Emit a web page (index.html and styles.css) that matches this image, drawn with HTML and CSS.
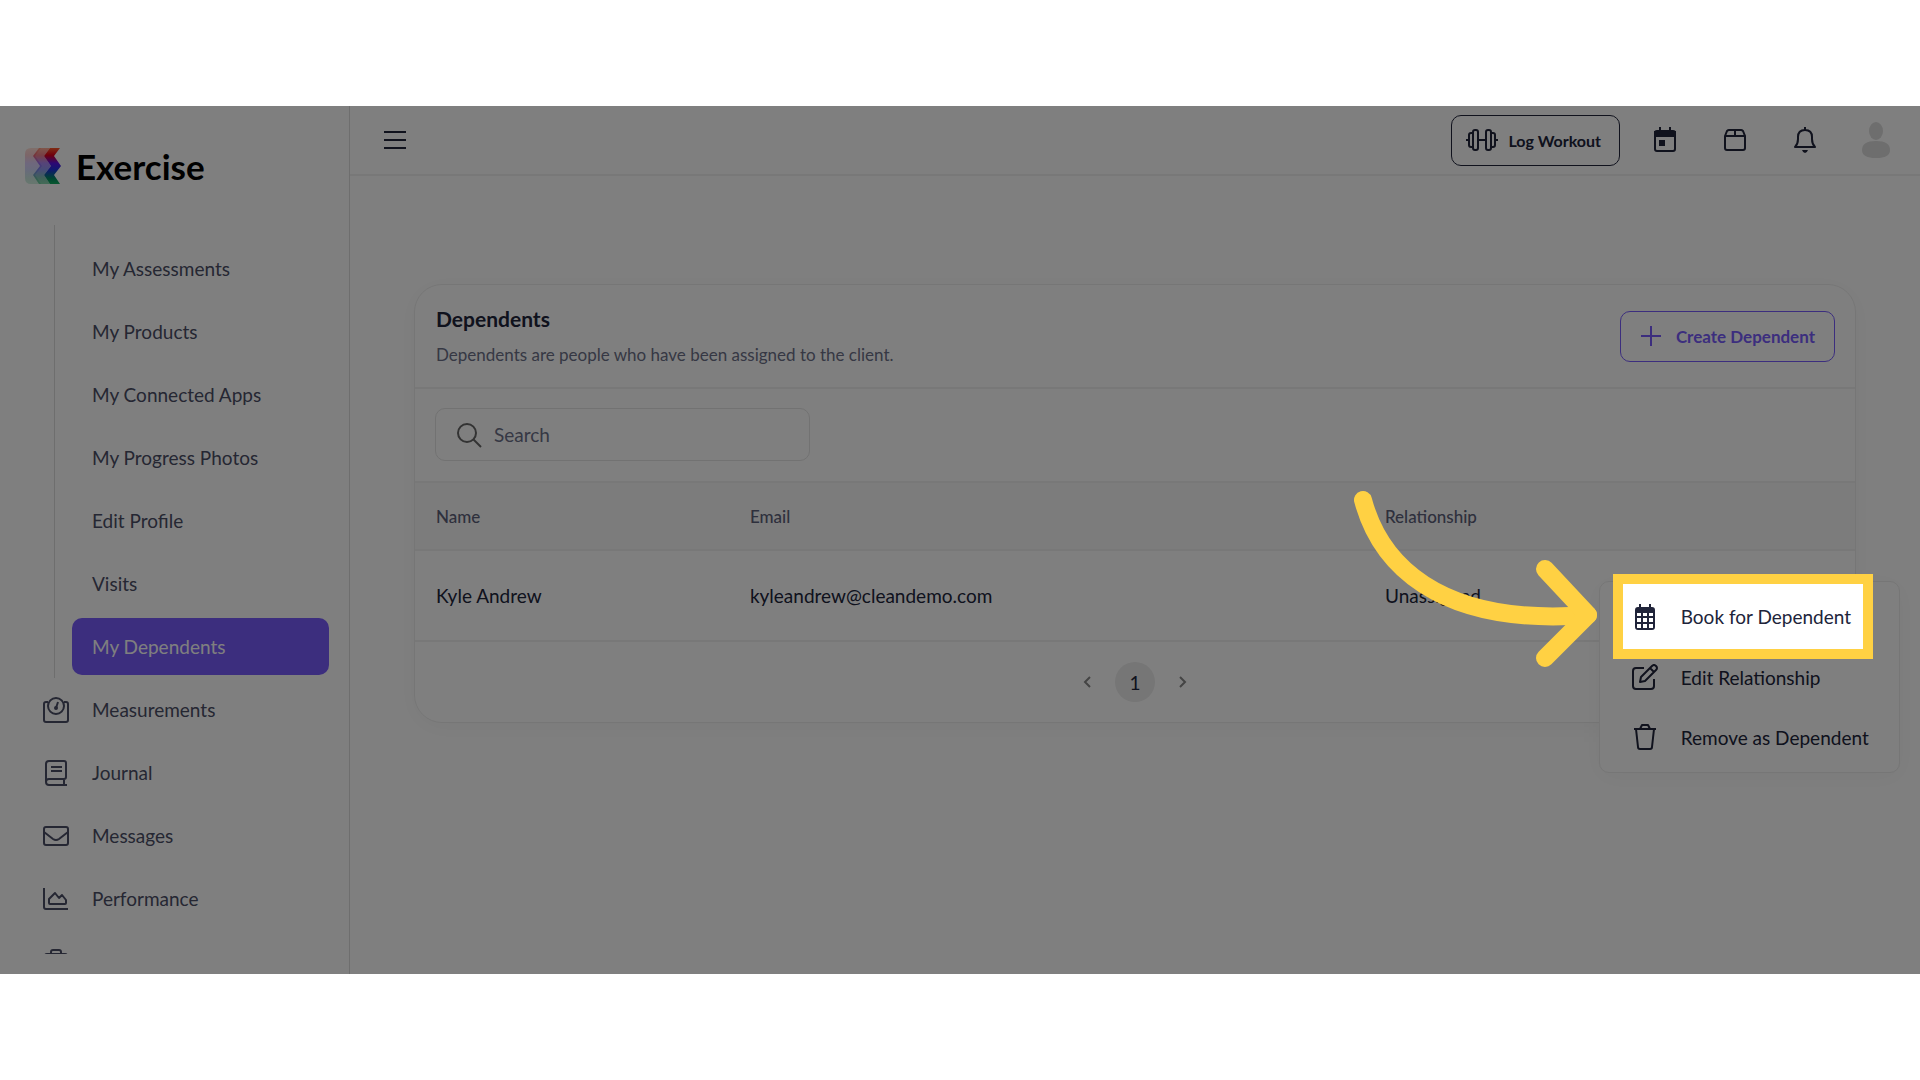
FILE: index.html
```html
<!DOCTYPE html>
<html lang="en">
<head>
    <meta charset="UTF-8">
    <meta name="viewport" content="width=device-width, initial-scale=1.0">
    <title>My Dependents</title>
    <link rel="stylesheet" href="styles.css">
</head>
<body>
    <div class="app">
        <aside class="sidebar">
            <a class="brand" href="#">
                <svg width="36" height="36" viewBox="0 0 36 36">
                    <defs>
                        <linearGradient id="brand-fill" x1="0" y1="0" x2="0" y2="1">
                            <stop offset="0" stop-color="#ff5a2a"/>
                            <stop offset="0.2" stop-color="#e00018"/>
                            <stop offset="0.42" stop-color="#5a10e8"/>
                            <stop offset="0.6" stop-color="#2030e0"/>
                            <stop offset="0.85" stop-color="#008c60"/>
                            <stop offset="1" stop-color="#10b060"/>
                        </linearGradient>
                    </defs>
                    <path fill="url(#brand-fill)" opacity="0.2" d="M6 0H16L10 8L17 18L10 27L16 36H6Q0 36 0 30V6Q0 0 6 0Z"/>
                    <path fill="url(#brand-fill)" opacity="0.5" d="M14 0H25L19 8L26 18L19 27L25 36H14L8 27L15 18L8 8Z"/>
                    <path fill="url(#brand-fill)" d="M25 0H35L29 8L36 18L29 27L35 36H25L19 27L26 18L19 8Z"/>
                </svg>
                <span>Exercise</span>
            </a>
            <nav class="nav">
                <div class="subnav">
                    <a href="#">My Assessments</a>
                    <a href="#">My Products</a>
                    <a href="#">My Connected Apps</a>
                    <a href="#">My Progress Photos</a>
                    <a href="#">Edit Profile</a>
                    <a href="#">Visits</a>
                    <a class="active" href="#">My Dependents</a>
                </div>
                <a class="nav-link" href="#">
                    <svg width="26" height="26" viewBox="0 0 26 26" fill="none" stroke="currentColor" stroke-width="2">
                        <path d="M5 5H3Q1 5 1 7V23Q1 25 3 25H23Q25 25 25 23V7Q25 5 23 5H21"/>
                        <circle cx="13" cy="9" r="8"/>
                        <path d="M13 11L15 5"/><circle cx="13" cy="11" r="1"/>
                    </svg>
                    Measurements
                </a>
                <a class="nav-link" href="#">
                    <svg width="26" height="26" viewBox="0 0 26 26" fill="none" stroke="currentColor" stroke-width="2">
                        <path d="M24 25H6Q3 25 3 22V4Q3 1 6 1H21Q23 1 23 3V17Q23 19 21 19H6Q3 19 3 22M21 19V25M8 7H19M8 11H19"/>
                    </svg>
                    Journal
                </a>
                <a class="nav-link" href="#">
                    <svg width="26" height="26" viewBox="0 0 26 26" fill="none" stroke="currentColor" stroke-width="2">
                        <rect x="1" y="4" width="24" height="18" rx="2"/>
                        <path d="M1 9L10 16Q13 18 16 16L25 9"/>
                    </svg>
                    Messages
                </a>
                <a class="nav-link" href="#">
                    <svg width="26" height="26" viewBox="0 0 26 26" fill="none" stroke="currentColor" stroke-width="2" stroke-linejoin="round">
                        <path d="M1 2V21Q1 23 3 23H25"/>
                        <path d="M6 13L12 7L16 12L19 9L23 14V17Q23 18 22 18H7Q6 18 6 17Z"/>
                    </svg>
                    Performance
                </a>
                <a class="nav-link" href="#" aria-label="Packages">
                    <svg width="26" height="26" viewBox="0 0 26 26" fill="none" stroke="currentColor" stroke-width="2">
                        <path d="M8 5V3Q8 1 10 1H16Q18 1 18 3V5"/>
                        <rect x="2" y="5" width="22" height="19" rx="2"/>
                    </svg>
                </a>
            </nav>
        </aside>

        <div class="content">
            <header class="topbar">
                <button class="icon-btn" aria-label="Toggle menu">
                    <svg width="22" height="20" viewBox="0 0 22 20" stroke="currentColor" stroke-width="2">
                        <path d="M0 2H22M0 10H22M0 18H22"/>
                    </svg>
                </button>
                <div class="topbar-actions">
                    <button class="btn">
                        <svg width="32" height="24" viewBox="0 0 32 24" fill="none" stroke="currentColor" stroke-width="2">
                            <rect x="7" y="2" width="5" height="20" rx="2"/>
                            <rect x="20" y="2" width="5" height="20" rx="2"/>
                            <path d="M7 5H5Q3 5 3 7V17Q3 19 5 19H7M25 5H27Q29 5 29 7V17Q29 19 27 19H25M12 12H20M0 12H3M29 12H32"/>
                        </svg>
                        Log Workout
                    </button>
                    <button class="icon-btn" aria-label="Calendar">
                        <svg width="26" height="26" viewBox="0 0 26 26" fill="none" stroke="currentColor" stroke-width="2">
                            <rect x="3" y="4" width="20" height="20" rx="2"/>
                            <path fill="currentColor" d="M3 5H23V9H3Z"/>
                            <path d="M8 0V4M18 0V4"/>
                            <path fill="currentColor" stroke="none" d="M7 13H13V19H7Z"/>
                        </svg>
                    </button>
                    <button class="icon-btn" aria-label="Packages">
                        <svg width="26" height="26" viewBox="0 0 26 26" fill="none" stroke="currentColor" stroke-width="2">
                            <path d="M3 9L5 4Q6 3 7 3H19Q20 3 21 4L23 9V21Q23 23 21 23H5Q3 23 3 21ZM3 9H23M13 3V9"/>
                        </svg>
                    </button>
                    <button class="icon-btn" aria-label="Notifications">
                        <svg width="26" height="26" viewBox="0 0 26 26" fill="none" stroke="currentColor" stroke-width="2" stroke-linejoin="round">
                            <path d="M3 20Q6 17 6 12V10Q6 3 13 3Q20 3 20 10V12Q20 17 23 20ZM13 3V0"/>
                            <path fill="currentColor" stroke="none" d="M10 23H16Q15 26 13 26Q11 26 10 23Z"/>
                        </svg>
                    </button>
                    <button class="icon-btn avatar" aria-label="Account">
                        <svg width="28" height="36" viewBox="0 0 28 36" fill="currentColor">
                            <ellipse cx="14" cy="9" rx="7" ry="9"/>
                            <path d="M14 19Q28 19 28 28Q28 36 14 36Q0 36 0 28Q0 19 14 19Z"/>
                        </svg>
                    </button>
                </div>
            </header>

            <main class="main">
                <section class="card">
                    <div class="card-header">
                        <div>
                            <h1>Dependents</h1>
                            <p>Dependents are people who have been assigned to the client.</p>
                        </div>
                        <button class="btn btn-primary">
                            <svg width="20" height="20" viewBox="0 0 20 20" stroke="currentColor" stroke-width="2">
                                <path d="M10 0V20M0 10H20"/>
                            </svg>
                            Create Dependent
                        </button>
                    </div>
                    <div class="card-filter">
                        <label class="search">
                            <svg width="26" height="26" viewBox="0 0 26 26" fill="none" stroke="currentColor" stroke-width="2">
                                <circle cx="11" cy="11" r="9"/>
                                <path d="M17 17L25 25"/>
                            </svg>
                            <input type="text" placeholder="Search" aria-label="Search">
                        </label>
                    </div>
                    <table>
                        <thead>
                            <tr>
                                <th class="col-name">Name</th>
                                <th class="col-email">Email</th>
                                <th>Relationship</th>
                            </tr>
                        </thead>
                        <tbody>
                            <tr>
                                <td>Kyle Andrew</td>
                                <td>kyleandrew@cleandemo.com</td>
                                <td>Unassigned</td>
                            </tr>
                        </tbody>
                    </table>
                    <div class="pagination">
                        <button class="page-arrow" aria-label="Previous page">
                            <svg width="8" height="12" viewBox="0 0 8 12" fill="none" stroke="currentColor" stroke-width="2">
                                <path d="M7 1L2 6L7 11"/>
                            </svg>
                        </button>
                        <button class="page">1</button>
                        <button class="page-arrow" aria-label="Next page">
                            <svg width="8" height="12" viewBox="0 0 8 12" fill="none" stroke="currentColor" stroke-width="2">
                                <path d="M1 1L6 6L1 11"/>
                            </svg>
                        </button>
                    </div>

                    <div class="menu">
                        <button class="menu-item spotlight">
                            <svg width="26" height="26" viewBox="0 0 26 26">
                                <path fill="currentColor" fill-rule="evenodd" d="M7 0H9V3H17V0H19V3H20Q23 3 23 6V23Q23 26 20 26H6Q3 26 3 23V6Q3 3 6 3H7ZM5 9V12H9V9ZM11 9V12H15V9ZM17 9V12H21V9ZM5 14V18H9V14ZM11 14V18H15V14ZM17 14V18H21V14ZM5 20V24H9V20ZM11 20V24H15V20ZM17 20V24H21V20Z"/>
                            </svg>
                            Book for Dependent
                            <svg class="arrow" width="246" height="184" viewBox="0 0 246 184" fill="none" stroke="currentColor" stroke-width="18" stroke-linecap="round" stroke-linejoin="round">
                                <path d="M11 15C27 75 82 142 236 130"/>
                                <path d="M193 84L236 130L193 173"/>
                            </svg>
                        </button>
                        <button class="menu-item">
                            <svg width="26" height="26" viewBox="0 0 26 26" fill="none" stroke="currentColor" stroke-width="2" stroke-linejoin="round">
                                <path d="M12 4H4Q1 4 1 7V22Q1 25 4 25H19Q22 25 22 22V15"/>
                                <path d="M8 18L9 13L20 2Q22 0 24 2Q26 4 24 6L13 17ZM18 4L22 8"/>
                            </svg>
                            Edit Relationship
                        </button>
                        <button class="menu-item">
                            <svg width="26" height="26" viewBox="0 0 26 26" fill="none" stroke="currentColor" stroke-width="2" stroke-linejoin="round">
                                <path d="M2 5H24M8 5L10 1H16L18 5M4 5L6 23Q6 25 8 25H18Q20 25 20 23L22 5"/>
                            </svg>
                            Remove as Dependent
                        </button>
                    </div>
                </section>
            </main>
        </div>
        <div class="dim"></div>
    </div>
</body>
</html>
```
FILE: styles.css
```css
* {
    box-sizing: border-box;
}
body {
    margin: 0;
    padding: 106px 0;
    height: 100vh;
    background: #fff;
    font-family: Lato, "Liberation Sans", sans-serif;
    font-size: 19px;
    color: #20243a;
}
a {
    color: inherit;
    text-decoration: none;
}
button {
    font: inherit;
    color: inherit;
    background: none;
    border: none;
    padding: 0;
    cursor: pointer;
}
svg {
    flex: none;
}
.app {
    position: relative;
    display: flex;
    height: 100%;
}

/* sidebar */
.sidebar {
    width: 350px;
    display: flex;
    flex-direction: column;
    padding-bottom: 20px;
    border-right: 1px solid #dcdcdc;
}
.brand {
    display: flex;
    align-items: center;
    gap: 15px;
    height: 119px;
    padding-left: 25px;
    font-size: 35px;
    font-weight: bold;
    color: #000;
}
.nav {
    flex: 1;
    min-height: 0;
    overflow: hidden;
    color: #4b4e66;
}
.subnav {
    display: flex;
    flex-direction: column;
    gap: 6px;
    margin-left: 54px;
    padding: 15px 20px 3px 17px;
    border-left: 1px solid #dcdcdc;
}
.subnav a {
    line-height: 57px;
    padding-left: 20px;
    border-radius: 10px;
}
.subnav .active {
    background: #785cfc;
    color: #fff;
}
.nav-link {
    display: flex;
    align-items: center;
    gap: 23px;
    height: 63px;
    padding-left: 43px;
}

/* top bar */
.content {
    flex: 1;
    display: flex;
    flex-direction: column;
}
.topbar {
    display: flex;
    justify-content: space-between;
    align-items: center;
    height: 70px;
    padding: 0 30px 0 34px;
    border-bottom: 2px solid #f0f0f0;
}
.topbar-actions {
    display: flex;
    align-items: center;
    gap: 44px;
}
.icon-btn {
    display: flex;
}
.topbar-actions .btn {
    margin-right: -12px;
    font-size: 16px;
}
.avatar {
    color: #dcdcdc;
}
.btn {
    display: flex;
    align-items: center;
    gap: 10px;
    height: 51px;
    padding: 0 18px 0 14px;
    border: 1px solid #20243a;
    border-radius: 10px;
    font-size: 17px;
    font-weight: bold;
}
.btn-primary {
    gap: 15px;
    padding: 0 19px 0 20px;
    border-color: #785cfc;
    color: #785cfc;
}

/* card */
.main {
    padding: 108px 64px;
}
.card {
    position: relative;
    border: 1px solid #ececec;
    border-radius: 28px;
    box-shadow: 0 4px 24px rgba(0, 0, 0, 0.04);
}
.card-header {
    display: flex;
    justify-content: space-between;
    align-items: center;
    height: 104px;
    padding: 0 20px 0 21px;
    border-bottom: 2px solid #f0f0f0;
}
h1 {
    margin: 0 0 12px;
    font-size: 21px;
    line-height: 26px;
}
p {
    margin: 0;
    font-size: 17px;
    line-height: 22px;
    color: #6c7088;
}
.card-filter {
    padding: 19px 20px 20px;
}
.search {
    display: flex;
    align-items: center;
    gap: 12px;
    width: 375px;
    height: 53px;
    padding: 0 20px;
    border: 1px solid #e4e4e4;
    border-radius: 10px;
    color: #666;
}
.search input {
    flex: 1;
    min-width: 0;
    padding: 0;
    border: none;
    outline: none;
    background: none;
    font: inherit;
}
.search input::placeholder {
    color: #6c7088;
}
table {
    width: 100%;
    border-collapse: collapse;
    table-layout: fixed;
}
.col-name {
    width: 21.8%;
}
.col-email {
    width: 44.1%;
}
th {
    height: 68px;
    padding: 0 0 0 21px;
    text-align: left;
    font-size: 17px;
    font-weight: 500;
    color: #5c607a;
    background: #f9f9f9;
    border-top: 2px solid #f0f0f0;
    border-bottom: 2px solid #f0f0f0;
}
td {
    height: 91px;
    padding: 0 0 0 21px;
    border-bottom: 2px solid #f0f0f0;
}
.pagination {
    display: flex;
    justify-content: center;
    align-items: center;
    gap: 24px;
    height: 80px;
}
.page {
    width: 40px;
    height: 40px;
    border-radius: 50%;
    background: #ececec;
}
.page-arrow {
    display: flex;
    color: #888;
}

/* row menu */
.menu {
    position: absolute;
    top: 296px;
    right: -45px;
    padding: 5px;
    background: #fff;
    border: 1px solid #ececec;
    border-radius: 10px;
    box-shadow: 0 4px 24px rgba(0, 0, 0, 0.04);
}
.menu-item {
    display: flex;
    align-items: center;
    gap: 23px;
    height: 60px;
    padding: 0 25px 0 27px;
}

/* guided step: everything is dimmed except the highlighted item */
.dim {
    position: absolute;
    inset: 0;
    background: rgba(0, 0, 0, 0.5);
}
.spotlight {
    position: relative;
    z-index: 1;
    height: 65px;
    margin: -3px 31px -2px 18px;
    padding: 0 12px 0 9px;
    background: #fff;
    box-shadow: 0 0 0 10px #ffd143;
}
.arrow {
    position: absolute;
    top: -99px;
    right: 100%;
    margin-right: 25px;
    color: #ffd143;
}
```
